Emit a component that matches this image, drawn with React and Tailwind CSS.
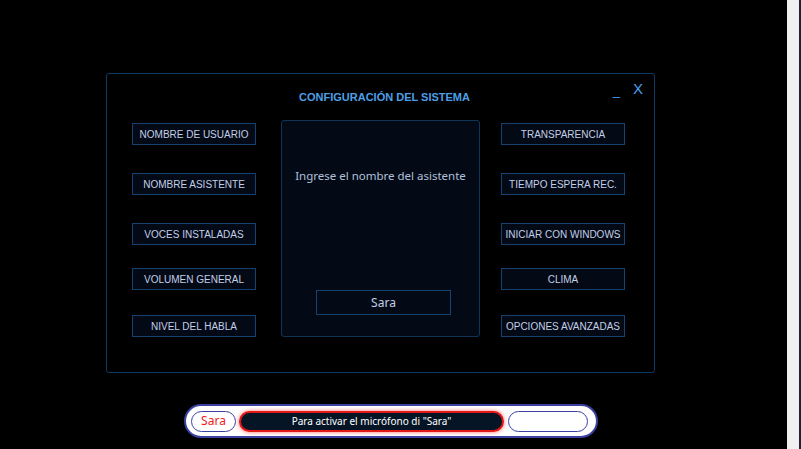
export default function App() {
  const left = [
    { label: 'NOMBRE DE USUARIO', mt: 'mt-[3px]' },
    { label: 'NOMBRE ASISTENTE', mt: 'mt-[28px]' },
    { label: 'VOCES INSTALADAS', mt: 'mt-[28px]' },
    { label: 'VOLUMEN GENERAL', mt: 'mt-[23px]' },
    { label: 'NIVEL DEL HABLA', mt: 'mt-[25px]' },
  ];
  const right = [
    { label: 'TRANSPARENCIA', mt: 'mt-[3px]' },
    { label: 'TIEMPO ESPERA REC.', mt: 'mt-[28px]' },
    { label: 'INICIAR CON WINDOWS', mt: 'mt-[28px]' },
    { label: 'CLIMA', mt: 'mt-[23px]' },
    { label: 'OPCIONES AVANZADAS', mt: 'mt-[25px]' },
  ];

  const btn =
    'h-[22px] w-[124px] flex items-center justify-center whitespace-nowrap border border-[#15426f] bg-[#040a15] text-[10px] text-[#c3cfe8] font-["Liberation_Sans",Arial,sans-serif]';

  return (
    <div className="w-[801px] h-[449px] bg-black flex overflow-hidden">
      {/* Main area */}
      <div className="w-[787px] h-full flex flex-col">
        {/* Settings dialog */}
        <div className="relative mt-[73px] ml-[106px] w-[549px] h-[300px] rounded-[3px] border border-[#0f3a66] bg-[radial-gradient(ellipse_140px_40px_at_50%_9%,#0c2a4a_0%,transparent_100%),radial-gradient(ellipse_180px_150px_at_22%_55%,#0a1f3a_0%,transparent_100%),radial-gradient(ellipse_220px_200px_at_80%_60%,#081a30_0%,transparent_100%),#040914] flex flex-col">
          {/* window controls */}
          <div className="absolute top-[7px] right-[11px] flex items-start gap-[13px] text-[#4aa0ee] font-['Liberation_Sans',Arial,sans-serif]">
            <span className="text-[13px] leading-none mt-[3px]">_</span>
            <span className="text-[15px] leading-none">X</span>
          </div>

          {/* Header */}
          <div className="h-[46px] flex items-center justify-center pl-[8px] pt-[1px]">
            <span className="text-[11px] font-bold text-[#4d9fe6] font-['Liberation_Sans',Arial,sans-serif]">
              CONFIGURACIÓN DEL SISTEMA
            </span>
          </div>

          {/* Body */}
          <div className="flex pl-[25px]">
            <div className="flex flex-col">
              {left.map((b) => (
                <div key={b.label} className={`${btn} ${b.mt}`}>
                  {b.label}
                </div>
              ))}
            </div>

            {/* Center panel */}
            <div className="ml-[25px] w-[199px] h-[217px] rounded-[3px] border border-[#0e3558] bg-[#030a16] flex flex-col items-center">
              <div className="mt-[46px] text-[11.5px] text-[#b2c0dc] font-['Noto_Sans',sans-serif]">
                Ingrese el nombre del asistente
              </div>
              <div className="mt-[106px] ml-[6px] w-[135px] h-[25px] border border-[#15426f] flex items-center justify-center text-[12px] text-[#c3cfe8] font-['Noto_Sans',sans-serif]">
                Sara
              </div>
            </div>

            <div className="flex flex-col ml-[21px]">
              {right.map((b) => (
                <div key={b.label} className={`${btn} ${b.mt}`}>
                  {b.label}
                </div>
              ))}
            </div>
          </div>
        </div>

        {/* Bottom bar */}
        <div className="mt-[31px] ml-[184px] w-[414px] h-[34px] rounded-full border-2 border-[#3b40a3] bg-white flex items-center px-[5px] gap-[3px]">
          <div className="w-[45px] h-[21px] rounded-full border border-[#3b40a3] bg-white flex items-center justify-center text-[12px] text-[#ee1c1c] font-['Noto_Sans',sans-serif]">
            Sara
          </div>
          <div className="w-[265px] h-[21px] rounded-full border-2 border-[#e01818] bg-[#061526] shadow-[0_0_4px_#ff6a6a] flex items-center justify-center text-[10px] text-white font-['Noto_Sans',sans-serif]">
            Para activar el micrófono di "Sara"
          </div>
          <div className="ml-[1px] w-[80px] h-[21px] rounded-full border border-[#3b40a3] bg-white" />
        </div>
      </div>

      {/* Right edge strip */}
      <div className="w-[12px] h-full bg-[#f0f0f0]" />
      <div className="w-[2px] h-full bg-[#1f2433]" />
    </div>
  );
}
